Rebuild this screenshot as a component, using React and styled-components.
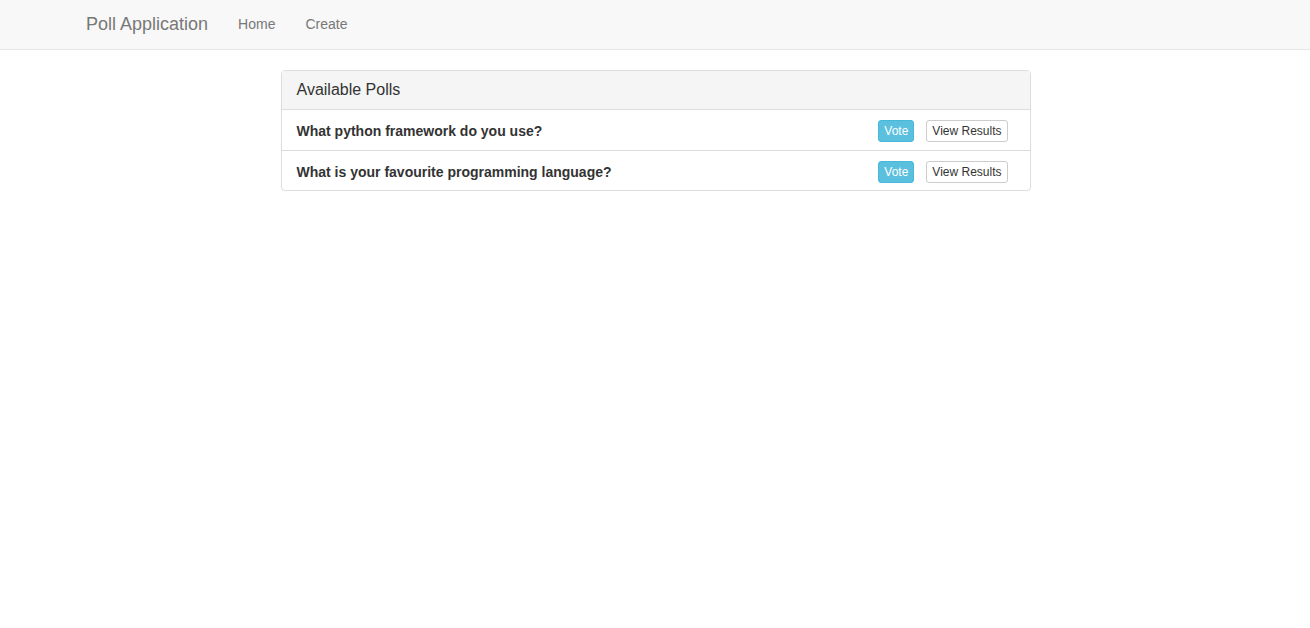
import React from "react";
import styled, { createGlobalStyle } from "styled-components";

const Global = createGlobalStyle`
  * { box-sizing: border-box; }
  body {
    margin: 0;
    font-family: "Liberation Sans", Arial, Helvetica, sans-serif;
    font-size: 14px;
    line-height: 1.42857143;
    color: #333;
    background: #fff;
  }
`;

const Navbar = styled.nav`
  height: 50px;
  background: #f8f8f8;
  border-bottom: 1px solid #e7e7e7;
  margin-bottom: 20px;
`;

const NavContainer = styled.div`
  width: 1170px;
  margin: 0 auto;
  padding: 0 15px 0 16px;
  display: flex;
  align-items: flex-start;
  height: 49px;
`;

const Brand = styled.a`
  margin-left: -15px;
  padding: 14px 15px 15px;
  font-size: 18px;
  line-height: 20px;
  color: #777;
  text-decoration: none;
`;

const NavLink = styled.a`
  padding: 14px 15px 15px;
  line-height: 20px;
  color: #777;
  text-decoration: none;
`;

const Main = styled.main`
  display: flex;
  justify-content: center;
  padding-left: 1px;
`;

const Panel = styled.section`
  width: 750px;
  border: 1px solid #ddd;
  border-radius: 4px;
  box-shadow: 0 1px 1px rgba(0, 0, 0, 0.05);
  overflow: hidden;
`;

const PanelHeading = styled.div`
  background: #f5f5f5;
  border-bottom: 1px solid #ddd;
  padding: 9px 15px 10px;
  height: 39px;
`;

const PanelTitle = styled.h3`
  margin: 0;
  font-size: 16px;
  font-weight: normal;
  line-height: 20px;
  color: #333;
`;

const Item = styled.div`
  display: flex;
  align-items: center;
  justify-content: space-between;
  height: 40px;
  padding: 2px 22px 0 15px;
  border-top: ${(p) => (p.$first ? "none" : "1px solid #ddd")};
`;

const Question = styled.strong`
  font-weight: bold;
  font-size: 14px;
`;

const Actions = styled.div`
  display: flex;
  gap: 12px;
  align-items: center;
`;

const Button = styled.a`
  display: inline-block;
  padding: 1px 5px;
  font-size: 12px;
  line-height: 18px;
  border-radius: 3px;
  border: 1px solid ${(p) => (p.$info ? "#46b8da" : "#ccc")};
  background: ${(p) => (p.$info ? "#5bc0de" : "#fff")};
  color: ${(p) => (p.$info ? "#fff" : "#333")};
  text-decoration: none;
`;

const polls = [
  "What python framework do you use?",
  "What is your favourite programming language?",
];

export default function App() {
  return (
    <>
      <Global />
      <Navbar>
        <NavContainer>
          <Brand href="#">Poll Application</Brand>
          <NavLink href="#">Home</NavLink>
          <NavLink href="#">Create</NavLink>
        </NavContainer>
      </Navbar>
      <Main>
        <Panel>
          <PanelHeading>
            <PanelTitle>Available Polls</PanelTitle>
          </PanelHeading>
          {polls.map((q, i) => (
            <Item key={q} $first={i === 0}>
              <Question>{q}</Question>
              <Actions>
                <Button $info href="#">Vote</Button>
                <Button href="#">View Results</Button>
              </Actions>
            </Item>
          ))}
        </Panel>
      </Main>
    </>
  );
}
